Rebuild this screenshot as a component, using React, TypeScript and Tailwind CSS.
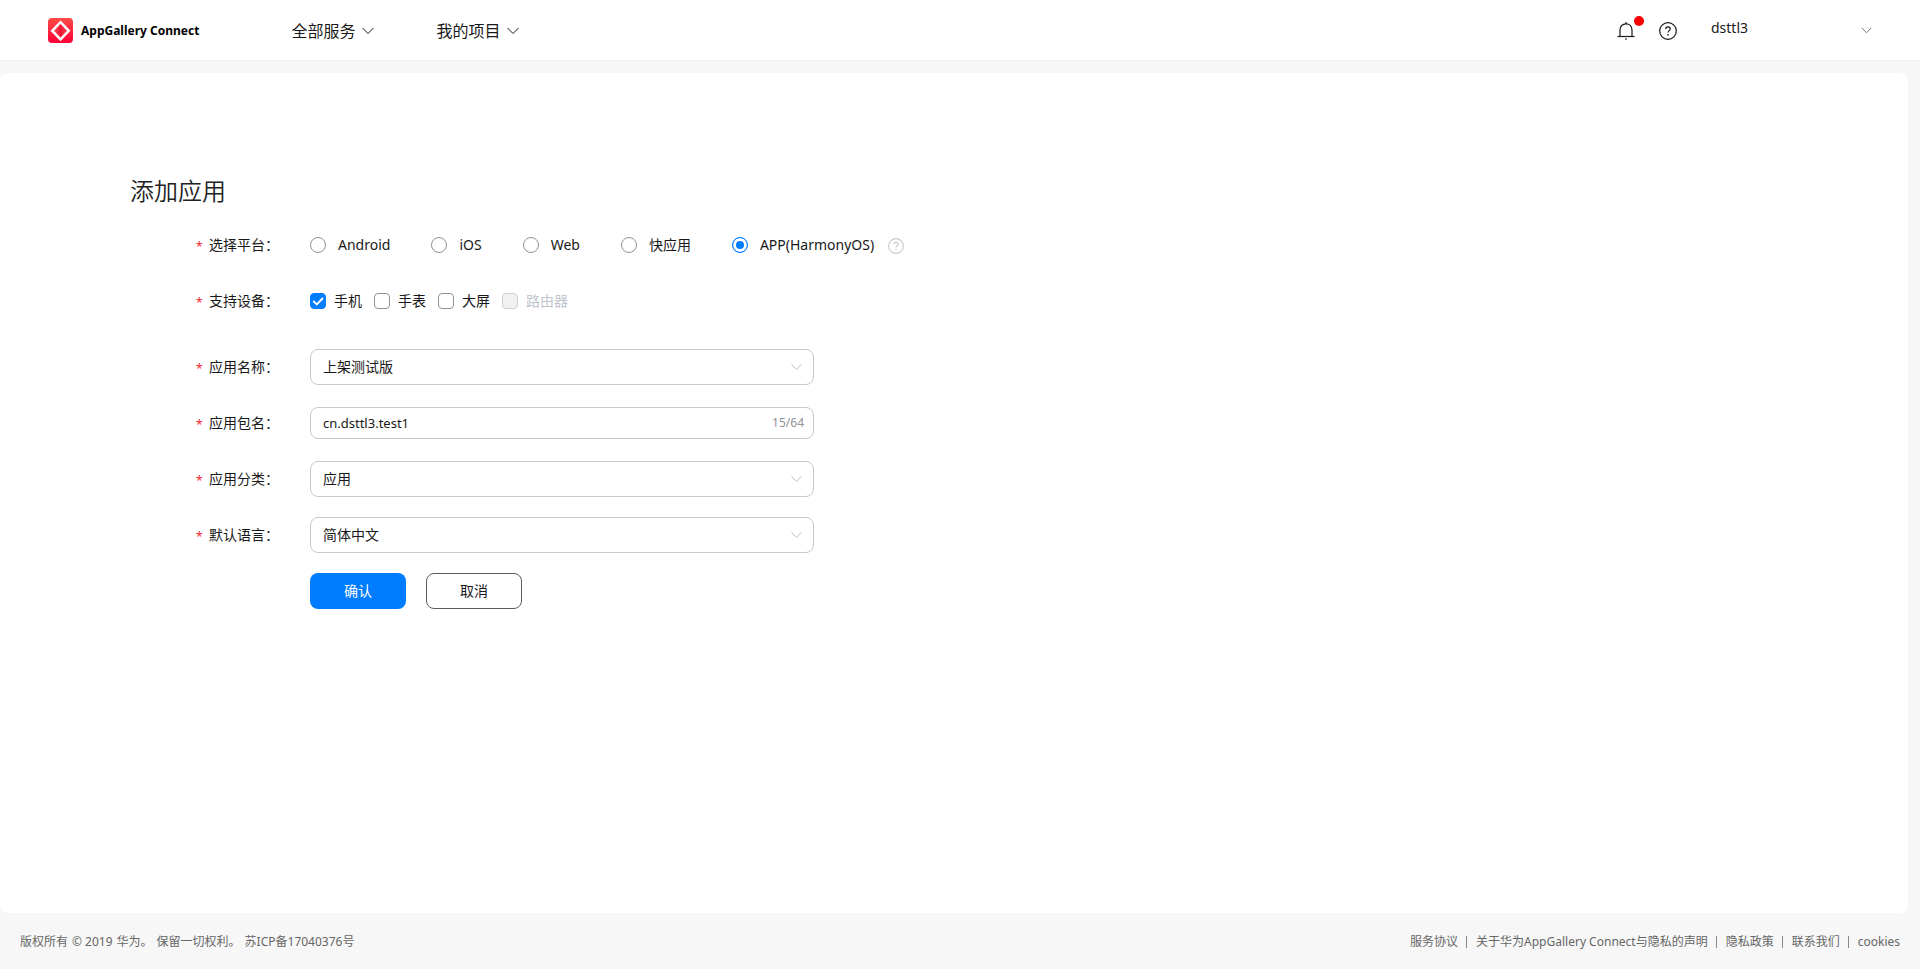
import React from "react";

type SelectFieldProps = {
  id: string;
  options: string[];
};

const platforms = ["Android", "iOS", "Web", "快应用", "APP(HarmonyOS)"];

const devices = [
  { name: "手机", checked: true, disabled: false },
  { name: "手表", checked: false, disabled: false },
  { name: "大屏", checked: false, disabled: false },
  { name: "路由器", checked: false, disabled: true },
];

const footerLinks = [
  "服务协议",
  "关于华为AppGallery Connect与隐私的声明",
  "隐私政策",
  "联系我们",
  "cookies",
];

function Chevron({ className }: { className?: string }) {
  return (
    <svg className={className} viewBox="0 0 12 8" fill="none" stroke="currentColor" aria-hidden="true">
      <path d="M0.5 1L6 6.5L11.5 1" />
    </svg>
  );
}

function Logo() {
  return (
    <svg className="h-[25px] w-[25px]" viewBox="0 0 25 25" aria-hidden="true">
      <defs>
        <linearGradient id="logo-bg" x1="0" y1="0" x2="0" y2="1">
          <stop offset="0" stopColor="#ff4b45" />
          <stop offset="1" stopColor="#ff0036" />
        </linearGradient>
        <linearGradient id="logo-core" x1="0" y1="0" x2="1" y2="0">
          <stop offset="0" stopColor="#ff5a5a" />
          <stop offset="0.5" stopColor="#ee1532" />
          <stop offset="1" stopColor="#ff4a50" />
        </linearGradient>
      </defs>
      <rect width="25" height="25" rx="4" fill="url(#logo-bg)" />
      <path d="M12.5 4.2L20.8 12.8L12.5 21.4L4.2 12.8Z" fill="url(#logo-core)" stroke="#fff" strokeWidth="2.5" />
    </svg>
  );
}

function BellIcon() {
  return (
    <svg className="h-[18px] w-[18px]" viewBox="0 0 18 18" fill="none" stroke="currentColor" strokeWidth="1.2" aria-hidden="true">
      <path d="M0.5 14.5H17.5" />
      <path d="M3 14.5V8C3 4.2 5.6 1.8 9 1.8S15 4.2 15 8V14.5" />
      <path d="M8 1.2H10M8 17H10" />
    </svg>
  );
}

function HelpIcon({ className }: { className?: string }) {
  return (
    <svg className={className} viewBox="0 0 18 18" fill="none" stroke="currentColor" aria-hidden="true">
      <circle cx="9" cy="9" r="8.3" strokeWidth="1.2" />
      <path d="M6.7 7.1C6.7 5.7 7.7 4.9 9 4.9S11.3 5.7 11.3 7C11.3 8.6 9 8.7 9 10.6" strokeWidth="1.2" />
      <path d="M9 12V13.4" strokeWidth="1.4" />
    </svg>
  );
}

function Header() {
  return (
    <header className="flex h-[61px] items-center border-b border-[#f0f0f0] bg-white px-12 pt-px">
      <a href="#" className="flex items-center gap-2">
        <Logo />
        <span className="text-xs font-bold text-black">AppGallery Connect</span>
      </a>
      <nav className="ml-[92px] flex items-center gap-[62px] text-base text-[#191919]">
        <button type="button" className="flex items-center gap-[7px]">
          全部服务
          <Chevron className="h-2 w-3" />
        </button>
        <button type="button" className="flex items-center gap-[7px]">
          我的项目
          <Chevron className="h-2 w-3" />
        </button>
      </nav>
      <div className="ml-auto flex items-center text-[#191919]">
        <button type="button" aria-label="消息" className="relative">
          <BellIcon />
          <span className="absolute -right-[9px] -top-[6px] h-[10px] w-[10px] rounded-full bg-[#fa0000]" />
        </button>
        <button type="button" aria-label="帮助" className="ml-6">
          <HelpIcon className="h-[18px] w-[18px]" />
        </button>
        <button type="button" className="ml-[34px] flex w-[161px] items-center justify-between text-sm">
          <span className="pb-[6px]">dsttl3</span>
          <Chevron className="h-[7px] w-[11px] text-[#666]" />
        </button>
      </div>
    </header>
  );
}

function FormRow({ label, htmlFor, children }: { label: string; htmlFor?: string; children: React.ReactNode }) {
  const Label = htmlFor ? "label" : "span";
  return (
    <div className="mb-5 flex min-h-9 items-center">
      <Label htmlFor={htmlFor} className="flex w-[180px] shrink-0 items-center gap-[6px] pl-[66px]">
        <span className="w-[7px] pt-1 text-xs text-[#fa2a2d]">*</span>
        <span className="whitespace-nowrap">{label}：</span>
      </Label>
      {children}
    </div>
  );
}

function SelectField({ id, options }: SelectFieldProps) {
  return (
    <div className="relative w-[504px]">
      <select id={id} className="h-9 w-full appearance-none rounded-lg border border-[#c9c9c9] bg-white px-3 text-sm">
        {options.map((option) => (
          <option key={option}>{option}</option>
        ))}
      </select>
      <Chevron className="pointer-events-none absolute right-3 top-[14px] h-2 w-[11px] text-[#b4b8c0]" />
    </div>
  );
}

function AddAppForm() {
  return (
    <form className="text-sm text-[#191919]">
      <FormRow label="选择平台">
        <div className="flex items-center">
          {platforms.map((platform) => (
            <label key={platform} className="mr-[41px] flex items-center gap-3 last-of-type:mr-[14px]">
              <input
                type="radio"
                name="platform"
                defaultChecked={platform === "APP(HarmonyOS)"}
                className="h-4 w-4 appearance-none rounded-full border border-[#8d929b] bg-white checked:border-[#007dff] checked:bg-[#007dff] checked:shadow-[inset_0_0_0_3px_#fff]"
              />
              {platform}
            </label>
          ))}
          <HelpIcon className="mt-[2px] h-4 w-4 text-[#c9c9c9]" />
        </div>
      </FormRow>
      <FormRow label="支持设备">
        <div className="flex items-center gap-3">
          {devices.map((device) => (
            <label key={device.name} className={device.disabled ? "flex items-center gap-2 text-[#c0c4cc]" : "flex items-center gap-2"}>
              <span className="relative flex">
                <input
                  type="checkbox"
                  defaultChecked={device.checked}
                  disabled={device.disabled}
                  className="peer h-4 w-4 appearance-none rounded border border-[#8d929b] bg-white checked:border-[#007dff] checked:bg-[#007dff] disabled:border-[#d0d0d0] disabled:bg-[#f1f1f1]"
                />
                <svg className="pointer-events-none absolute inset-0 hidden h-4 w-4 peer-checked:block" viewBox="0 0 16 16" fill="none" stroke="#fff" strokeWidth="1.8" aria-hidden="true">
                  <path d="M3.2 8L6.8 11.4L13 5" />
                </svg>
              </span>
              {device.name}
            </label>
          ))}
        </div>
      </FormRow>
      <div className="pt-[10px]">
        <FormRow label="应用名称" htmlFor="app-name">
          <SelectField id="app-name" options={["上架测试版"]} />
        </FormRow>
        <FormRow label="应用包名" htmlFor="package-name">
          <div className="flex h-8 w-[504px] items-center rounded-lg border border-[#c9c9c9] pl-3 pr-[9px]">
            <input id="package-name" type="text" defaultValue="cn.dsttl3.test1" className="min-w-0 flex-1 bg-transparent text-[13px] outline-none" />
            <span className="text-xs text-[#909399]">15/64</span>
          </div>
        </FormRow>
        <FormRow label="应用分类" htmlFor="category">
          <SelectField id="category" options={["应用"]} />
        </FormRow>
        <FormRow label="默认语言" htmlFor="language">
          <SelectField id="language" options={["简体中文"]} />
        </FormRow>
      </div>
      <div className="flex gap-5 pl-[180px]">
        <button type="submit" className="h-9 w-24 rounded-lg bg-[#007dff] text-white">
          确认
        </button>
        <button type="button" className="h-9 w-24 rounded-lg border border-[#5c5c5c] bg-white">
          取消
        </button>
      </div>
    </form>
  );
}

function Footer() {
  return (
    <footer className="flex h-14 items-center justify-between px-5 pt-[2px] text-xs text-[#666]">
      <p className="flex gap-1">
        <span>版权所有</span>
        <span>© 2019</span>
        <span>华为。</span>
        <span>保留一切权利。</span>
        <span>苏ICP备17040376号</span>
      </p>
      <ul className="flex items-center">
        {footerLinks.map((link) => (
          <li key={link} className="flex items-center before:ml-2 before:mr-[9px] before:h-3 before:w-px before:bg-[#888] before:content-[''] first:before:hidden">
            <a href="#">{link}</a>
          </li>
        ))}
      </ul>
    </footer>
  );
}

export default function App() {
  return (
    <div className="flex min-h-screen flex-col bg-[#f7f7f7] font-['Noto_Sans','Noto_Sans_CJK_SC',sans-serif]">
      <Header />
      <main className="mr-3 mt-3 flex-1 rounded-lg bg-white px-[130px] pt-[100px]">
        <h1 className="mb-[18px] text-2xl font-[350] leading-9 text-[#222]">添加应用</h1>
        <AddAppForm />
      </main>
      <Footer />
    </div>
  );
}
